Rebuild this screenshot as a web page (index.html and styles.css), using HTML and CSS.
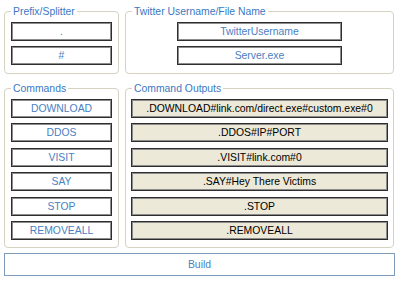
FILE: index.html
```html
<!DOCTYPE html>
<html lang="en">
<head>
    <meta charset="UTF-8">
    <title>Builder</title>
    <link rel="stylesheet" href="styles.css">
</head>
<body>
    <div class="window">
        <div class="row top-row">
            <div class="group">
                <span class="group-title">Prefix/Splitter</span>
                <div class="stack">
                    <div class="field blue small">.</div>
                    <div class="field blue small">#</div>
                </div>
            </div>
            <div class="group">
                <span class="group-title">Twitter Username/File Name</span>
                <div class="stack center">
                    <div class="field blue name">TwitterUsername</div>
                    <div class="field blue name">Server.exe</div>
                </div>
            </div>
        </div>

        <div class="row cmd-row">
            <div class="group">
                <span class="group-title">Commands</span>
                <div class="stack">
                    <div class="field blue small">DOWNLOAD</div>
                    <div class="field blue small">DDOS</div>
                    <div class="field blue small">VISIT</div>
                    <div class="field blue small">SAY</div>
                    <div class="field blue small">STOP</div>
                    <div class="field blue small">REMOVEALL</div>
                </div>
            </div>
            <div class="group">
                <span class="group-title">Command Outputs</span>
                <div class="stack outputs">
                    <div class="field output">.DOWNLOAD#link.com/direct.exe#custom.exe#0</div>
                    <div class="field output">.DDOS#IP#PORT</div>
                    <div class="field output">.VISIT#link.com#0</div>
                    <div class="field output">.SAY#Hey There Victims</div>
                    <div class="field output">.STOP</div>
                    <div class="field output">.REMOVEALL</div>
                </div>
            </div>
        </div>

        <button class="build-btn">Build</button>
    </div>
</body>
</html>
```

FILE: styles.css
```css
body {
    margin: 0;
    background: #fff;
    font-family: "Liberation Sans", Arial, sans-serif;
    font-size: 10.4px;
}
.window {
    padding: 11px 6px 0 4px;
}
.row {
    display: grid;
    grid-template-columns: 115px 269px;
    gap: 6px;
}
.cmd-row {
    margin-top: 14px;
}
.group {
    position: relative;
    border: 1px solid #d5d2c2;
    border-radius: 4px;
    padding: 10px 6px 8px 6px;
}
.top-row .group {
    height: 63px;
    box-sizing: border-box;
}
.cmd-row .group {
    height: 160px;
    box-sizing: border-box;
}
.group-title {
    position: absolute;
    top: -7px;
    left: 6px;
    padding: 0 2px;
    background: #fff;
    color: #3b78c2;
    line-height: 13px;
}
.stack {
    display: flex;
    flex-direction: column;
    gap: 5px;
}
.cmd-row .stack {
    gap: 5.4px;
}
.stack.center {
    align-items: center;
}
.stack.outputs {
    margin-left: -1px;
    margin-right: -1px;
}
.field {
    height: 19px;
    box-sizing: border-box;
    border: 1px solid #2e2e2e;
    box-shadow: inset 0 0 0 1px #8c8c8c;
    text-align: center;
    line-height: 17px;
    white-space: nowrap;
    overflow: hidden;
}
.field.blue {
    background: #fff;
    color: #4a80c2;
}
.field.small {
    width: 101px;
}
.field.name {
    width: 165px;
}
.field.output {
    background: #ece9d8;
    color: #000;
}
.build-btn {
    display: block;
    margin-top: 5px;
    width: 391px;
    height: 23px;
    background: #fff;
    border: 1px solid #7f9db9;
    color: #4a80c2;
    font-family: inherit;
    font-size: 10.4px;
    padding: 0;
}
```
